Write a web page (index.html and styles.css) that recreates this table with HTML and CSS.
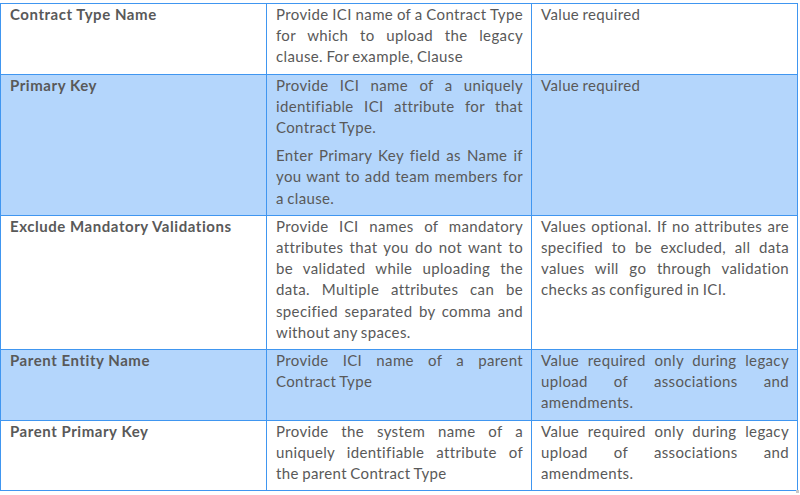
FILE: index.html
```html
<!DOCTYPE html>
<html>
<head>
<meta charset="utf-8">
<link rel="stylesheet" href="styles.css">
</head>
<body>
<div class="page">
<table class="spec">
  <colgroup><col class="c1"><col class="c2"><col class="c3"></colgroup>
  <tr>
    <td class="name">Contract Type Name</td>
    <td class="desc"><p>Provide ICI name of a Contract Type for which to upload the legacy clause. For example, Clause</p></td>
    <td class="desc"><p>Value required</p></td>
  </tr>
  <tr class="hl">
    <td class="name">Primary Key</td>
    <td class="desc"><p>Provide ICI name of a uniquely identifiable ICI attribute for that Contract Type.</p><p class="gap">Enter Primary Key field as Name if you want to add team members for a clause.</p></td>
    <td class="desc"><p>Value required</p></td>
  </tr>
  <tr>
    <td class="name">Exclude Mandatory Validations</td>
    <td class="desc"><p>Provide ICI names of mandatory attributes that you do not want to be validated while uploading the data. Multiple attributes can be specified separated by comma and without any spaces.</p></td>
    <td class="desc"><p>Values optional. If no attributes are specified to be excluded, all data values will go through validation checks as configured in ICI.</p></td>
  </tr>
  <tr class="hl">
    <td class="name">Parent Entity Name</td>
    <td class="desc"><p>Provide ICI name of a parent Contract Type</p></td>
    <td class="desc"><p>Value required only during legacy upload of associations and amendments.</p></td>
  </tr>
  <tr>
    <td class="name">Parent Primary Key</td>
    <td class="desc"><p>Provide the system name of a uniquely identifiable attribute of the parent Contract Type</p></td>
    <td class="desc"><p>Value required only during legacy upload of associations and amendments.</p></td>
  </tr>
</table>
<span class="corner"></span>
</div>
</body>
</html>
```
FILE: styles.css
```css
html, body {
  margin: 0;
  padding: 0;
  background: #ffffff;
}
.page {
  position: relative;
  padding-top: 3px;
  width: 800px;
  height: 492px;
}
.spec {
  border-collapse: collapse;
  table-layout: fixed;
  width: 797px;
  font-family: Lato, "Open Sans", sans-serif;
  font-size: 15px;
  letter-spacing: 0.36px;
  word-spacing: -0.8px;
  line-height: 21.2px;
  color: #595959;
}
.c1 { width: 266px; }
.c2 { width: 265px; }
.c3 { width: 266px; }
.spec td {
  border: 1px solid #4096f0;
  vertical-align: top;
  padding: 0 8px 6px 9px;
}
.spec tr.hl td {
  background: #b4d6fc;
}
.spec td.name {
  font-weight: bold;
  letter-spacing: 0.55px;
  word-spacing: 0;
}
.spec p {
  margin: 0;
  text-align: justify;
}
.spec p.gap {
  margin-top: 7px;
}
.corner {
  position: absolute;
  left: 796px;
  top: 490px;
  width: 3px;
  height: 3px;
  background: #c8c8c8;
}
```
